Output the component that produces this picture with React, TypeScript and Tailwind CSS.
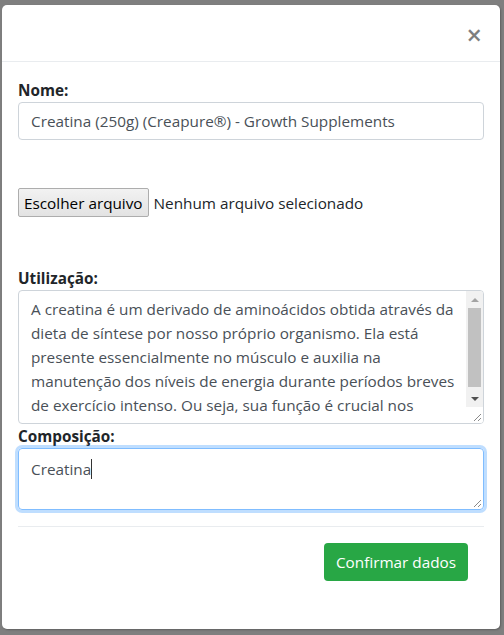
import React from "react";

const FONT = { fontFamily: '"Open Sans", "Noto Sans", sans-serif' };

const usoLines = [
  "A creatina é um derivado de aminoácidos obtida através da",
  "dieta de síntese por nosso próprio organismo. Ela está",
  "presente essencialmente no músculo e auxilia na",
  "manutenção dos níveis de energia durante períodos breves",
  "de exercício intenso. Ou seja, sua função é crucial nos",
];

function Grip() {
  return (
    <svg width="9" height="9" viewBox="0 0 9 9" className="block">
      <line x1="1" y1="8" x2="8" y2="1" stroke="#8a8a8a" strokeWidth="1" />
      <line x1="5" y1="8" x2="8" y2="5" stroke="#8a8a8a" strokeWidth="1" />
    </svg>
  );
}

function Scrollbar() {
  return (
    <div className="flex w-[17px] shrink-0 flex-col bg-[#f1f1f1]">
      <div className="flex h-[17px] items-center justify-center">
        <div className="h-0 w-0 border-x-[4px] border-b-[4px] border-x-transparent border-b-[#a3a3a3]" />
      </div>
      <div className="mx-[2px] h-[79px] bg-[#c1c1c1]" />
      <div className="flex-1" />
      <div className="flex h-[17px] items-center justify-center">
        <div className="h-0 w-0 border-x-[4px] border-t-[4px] border-x-transparent border-t-[#505050]" />
      </div>
      <div className="flex h-[16px] items-end justify-end bg-white pb-[1px] pr-[1px]">
        <Grip />
      </div>
    </div>
  );
}

export default function App() {
  return (
    <div className="min-h-[635px] bg-[#7f7f7f] pl-[2px] pt-[5px]" style={FONT}>
      <div className="flex h-[624px] w-[498px] flex-col rounded-[5px] bg-white shadow-[1px_1px_2px_rgba(0,0,0,0.25)]">
        {/* header */}
        <div className="flex h-[57px] shrink-0 items-center justify-end border-b border-[#e9ecef] pr-[18px]">
          <button className="pt-[3px] text-[27px] font-semibold leading-none text-black opacity-50">×</button>
        </div>

        {/* body */}
        <div className="flex flex-col px-4 pt-4 text-[15.3px] leading-6 text-[#212529]">
          <label className="font-bold">Nome:</label>
          <div className="flex h-[38px] items-center rounded-[4px] border border-[#ced4da] px-3 text-[#495057]">
            Creatina (250g) (Creapure®) - Growth Supplements
          </div>

          <div className="mt-[48px] flex items-center">
            <button className="h-[29px] rounded-[2px] border border-[#adadad] bg-gradient-to-b from-[#f2f2f2] to-[#e3e3e3] px-[5px] text-black">
              Escolher arquivo
            </button>
            <span className="ml-[5px]">Nenhum arquivo selecionado</span>
          </div>

          <label className="mt-[49px] font-bold">Utilização:</label>
          <div className="flex h-[134px] overflow-hidden rounded-[4px] border border-[#ced4da]">
            <div className="flex-1 overflow-hidden whitespace-nowrap px-3 py-[6px] text-[#495057]">
              {usoLines.map((l) => (
                <div key={l}>{l}</div>
              ))}
            </div>
            <Scrollbar />
          </div>

          <label className="font-bold">Composição:</label>
          <div className="relative h-[62px] rounded-[4px] border border-[#80bdff] px-3 py-[6px] text-[#495057] shadow-[0_0_0_3px_rgba(0,123,255,0.25)]">
            <span>Creatina</span>
            <span className="inline-block h-[20px] w-px translate-y-[4px] bg-[#333]" />
            <div className="absolute bottom-[1px] right-[1px]">
              <Grip />
            </div>
          </div>

          <div className="mt-[16px] border-t border-[#e9ecef]" />

          <div className="flex justify-end pr-4 pt-4">
            <button className="h-[38px] rounded-[4px] bg-[#28a745] px-3 text-white">Confirmar dados</button>
          </div>
        </div>
      </div>
    </div>
  );
}
